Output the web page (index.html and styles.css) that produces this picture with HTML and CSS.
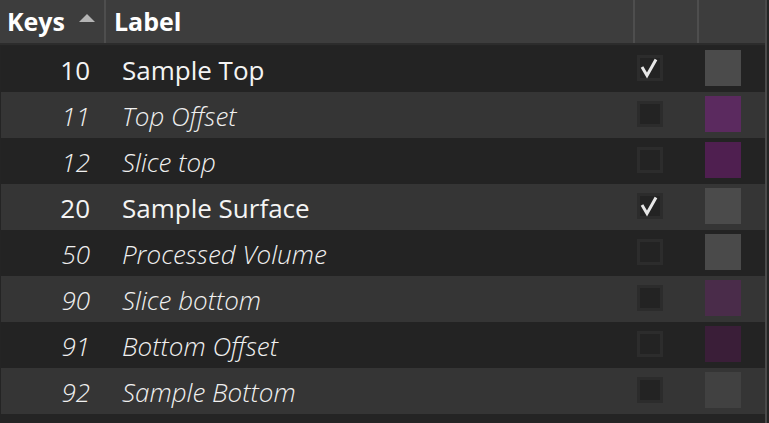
FILE: index.html
```html
<!DOCTYPE html>
<html lang="en">
<head>
    <meta charset="UTF-8">
    <title>Keys</title>
    <link rel="stylesheet" href="styles.css">
</head>
<body>
    <div class="grid">
        <div class="header">
            <div class="hcell keys">Keys <span class="sort"></span></div>
            <div class="hcell label">Label</div>
            <div class="hcell check"></div>
            <div class="hcell color"></div>
        </div>
        <div class="rows">
            <div class="row dark">
                <div class="key">10</div>
                <div class="name">Sample Top</div>
                <div class="cb"><span class="box"><svg viewBox="0 0 26 26"><path d="M5 12 L10 20.5 L19 4.5"/></svg></span></div>
                <div class="sw"><span class="swatch" style="background:#4b4b4b"></span></div>
            </div>
            <div class="row light italic">
                <div class="key">11</div>
                <div class="name">Top Offset</div>
                <div class="cb"><span class="box"></span></div>
                <div class="sw"><span class="swatch" style="background:#5b2a5f"></span></div>
            </div>
            <div class="row dark italic">
                <div class="key">12</div>
                <div class="name">Slice top</div>
                <div class="cb"><span class="box"></span></div>
                <div class="sw"><span class="swatch" style="background:#4f1f50"></span></div>
            </div>
            <div class="row light">
                <div class="key">20</div>
                <div class="name">Sample Surface</div>
                <div class="cb"><span class="box"><svg viewBox="0 0 26 26"><path d="M5 12 L10 20.5 L19 4.5"/></svg></span></div>
                <div class="sw"><span class="swatch" style="background:#4b4b4b"></span></div>
            </div>
            <div class="row dark italic">
                <div class="key">50</div>
                <div class="name">Processed Volume</div>
                <div class="cb"><span class="box"></span></div>
                <div class="sw"><span class="swatch" style="background:#4a4a4a"></span></div>
            </div>
            <div class="row light italic">
                <div class="key">90</div>
                <div class="name">Slice bottom</div>
                <div class="cb"><span class="box"></span></div>
                <div class="sw"><span class="swatch" style="background:#4a2c4a"></span></div>
            </div>
            <div class="row dark italic">
                <div class="key">91</div>
                <div class="name">Bottom Offset</div>
                <div class="cb"><span class="box"></span></div>
                <div class="sw"><span class="swatch" style="background:#3a1e38"></span></div>
            </div>
            <div class="row light italic">
                <div class="key">92</div>
                <div class="name">Sample Bottom</div>
                <div class="cb"><span class="box"></span></div>
                <div class="sw"><span class="swatch" style="background:#414141"></span></div>
            </div>
        </div>
    </div>
</body>
</html>
```
FILE: styles.css
```css
* {
    box-sizing: border-box;
    font-family: "Open Sans", "Noto Sans", sans-serif;
}
html, body {
    margin: 0;
    padding: 0;
    width: 100%;
    height: 100%;
    background: #242424;
    overflow: hidden;
}
.grid {
    width: 767px;
    display: flex;
    flex-direction: column;
    border-right: 2px solid #4a4a4a;
    height: 100%;
}
.header {
    display: flex;
    height: 45px;
    background: #3d3d3d;
    border-bottom: 2px solid #2c2c2c;
    color: #ffffff;
    font-weight: bold;
    font-size: 25px;
}
.hcell {
    display: flex;
    align-items: center;
    border-right: 2px solid #4e4e4e;
    height: 43px;
    padding-bottom: 2px;
}
.hcell.keys {
    width: 106px;
    padding-left: 7px;
}
.hcell.label {
    width: 529px;
    padding-left: 8px;
}
.hcell.check {
    width: 64px;
}
.hcell.color {
    width: 66px;
    border-right: none;
}
.sort {
    width: 0;
    height: 0;
    margin-left: 14px;
    border-left: 8px solid transparent;
    border-right: 8px solid transparent;
    border-bottom: 8px solid #b4b4b4;
    margin-top: -5px;
}
.rows {
    margin-top: 1px;
    padding-left: 1px;
}
.row {
    display: flex;
    align-items: center;
    height: 46px;
    color: #f4f4f4;
    font-size: 26px;
}
.row.dark { background: #232323; }
.row.light { background: #353535; }
.row.italic {
    font-style: italic;
    font-weight: 300;
    color: #f0f0f0;
}
.key {
    width: 89px;
    text-align: right;
    margin-top: 2px;
}
.name {
    width: 547px;
    padding-left: 32px;
    margin-top: 2px;
}
.cb {
    width: 68px;
    display: flex;
    align-items: center;
}
.box {
    width: 26px;
    height: 26px;
    border: 3px solid #2c2c2c;
    background: #232323;
    display: block;
    margin-top: -3px;
    position: relative;
}
.box svg {
    position: absolute;
    left: -3px;
    top: -3px;
    width: 26px;
    height: 26px;
}
.box path {
    fill: none;
    stroke: #e6e6e6;
    stroke-width: 3;
}
.sw {
    display: flex;
    align-items: center;
}
.swatch {
    width: 36px;
    height: 36px;
    display: block;
    margin-top: -2px;
}
```
